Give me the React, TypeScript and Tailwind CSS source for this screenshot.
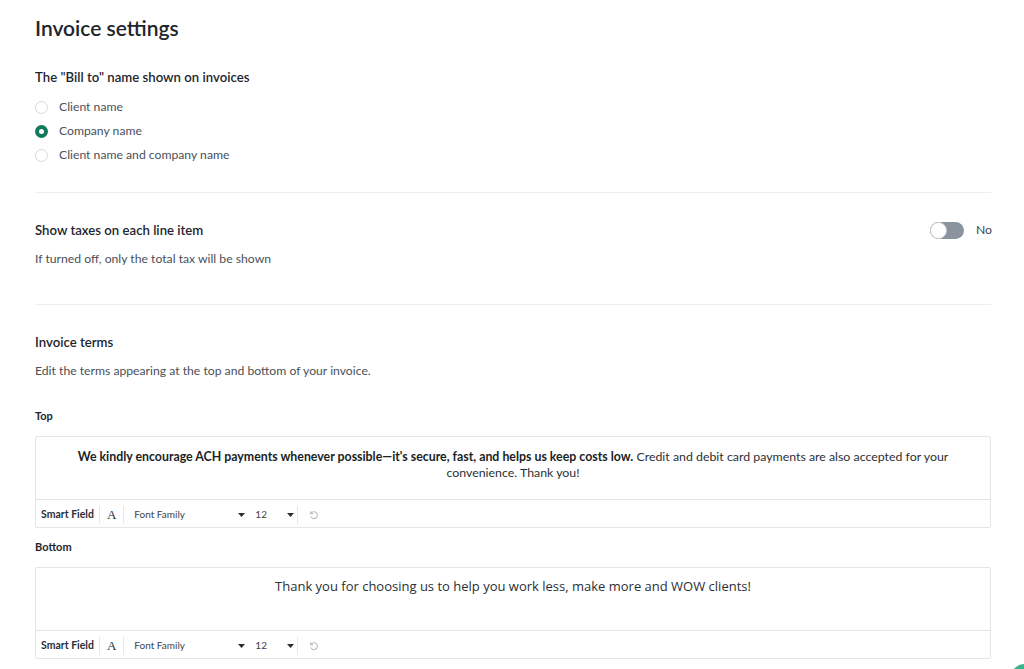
import React from "react";

function Radio({ checked, label }: { checked?: boolean; label: string }) {
  return (
    <div className="flex items-center h-6">
      {checked ? (
        <span className="w-[13px] h-[13px] rounded-full bg-[#127a5b] flex items-center justify-center">
          <span className="w-[5px] h-[5px] rounded-full bg-white" />
        </span>
      ) : (
        <span className="w-[13px] h-[13px] rounded-full border border-[#d6d9dc] bg-white" />
      )}
      <span className="ml-[11px] text-[12.2px] text-[#4a5058]">{label}</span>
    </div>
  );
}

function Caret() {
  return (
    <svg width="7" height="4" viewBox="0 0 7 4" className="fill-[#2a2f35] shrink-0">
      <path d="M0 0h7L3.5 4z" />
    </svg>
  );
}

function Toolbar() {
  return (
    <div className="h-[28px] pt-[2px] border-t border-[#e3e5e8] flex items-center text-[10px] text-[#3c434b]">
      <span className="pl-[5px] pr-[5px] text-[10.5px] font-bold text-[#2a2f35]">Smart Field</span>
      <span className="w-px h-[18px] bg-[#e6e8ea]" />
      <span className="px-[7px] text-[13px] text-[#2a2f35]" style={{ fontFamily: '"Liberation Serif", serif' }}>
        A
      </span>
      <span className="w-px h-[18px] bg-[#e6e8ea]" />
      <span className="pl-[10px] w-[114px]">Font Family</span>
      <Caret />
      <span className="pl-[10px] w-[42px]">12</span>
      <Caret />
      <span className="ml-[3px] w-px h-[18px] bg-[#e6e8ea]" />
      <svg width="10" height="10" viewBox="0 0 10 10" className="ml-[11px]" fill="none" stroke="#b8bdc3" strokeWidth="1.1">
        <path d="M2.2 3.2A3.4 3.4 0 1 1 1.8 6.4" />
        <path d="M1.6 1.2v2.4h2.4" />
      </svg>
    </div>
  );
}

export default function App() {
  return (
    <div
      className="relative w-[1024px] h-[669px] overflow-hidden bg-white text-[#1e252d]"
      style={{ fontFamily: 'Lato, "Open Sans", sans-serif' }}
    >
      <div className="pl-[35px] pr-[33px] pt-[14px]">
        <h1 className="text-[21px] leading-[28px] font-semibold text-[#1e252d]">Invoice settings</h1>

        <div className="mt-[26px]">
          <div className="text-[13.2px] leading-[18px] font-semibold">The "Bill to" name shown on invoices</div>
          <div className="mt-[9px] flex flex-col">
            <Radio label="Client name" />
            <Radio checked label="Company name" />
            <Radio label="Client name and company name" />
          </div>
        </div>

        <div className="mt-[25px] h-px bg-[#eceef0]" />

        <div className="flex justify-between pt-[28px] pb-[37px]">
          <div>
            <div className="text-[13.2px] leading-[18px] font-semibold">Show taxes on each line item</div>
            <div className="mt-[12px] text-[12.2px] leading-[16px] text-[#4a5058]">If turned off, only the total tax will be shown</div>
          </div>
          <div className="flex items-center h-[18px] mr-[-1px]">
            <span className="relative w-[34px] h-[17px] rounded-full bg-[#8a939e]">
              <span className="absolute left-0 top-0 w-[17px] h-[17px] rounded-full bg-white border border-[#c9ced4]" />
            </span>
            <span className="ml-[12px] text-[12.2px] text-[#3c434b]">No</span>
          </div>
        </div>

        <div className="h-px bg-[#eceef0]" />

        <div className="pt-[28px]">
          <div className="text-[13.2px] leading-[18px] font-semibold">Invoice terms</div>
          <div className="mt-[12px] text-[12.2px] leading-[16px] text-[#4a5058]">
            Edit the terms appearing at the top and bottom of your invoice.
          </div>

          <div className="mt-[30px] text-[11px] leading-[14px] font-bold">Top</div>
          <div className="mt-[13px] border border-[#e3e5e8] rounded-[2px]">
            <div className="h-[62px] px-[40px] pt-[12px] text-center text-[12.35px] leading-[16px] text-[#2a2f35]">
              <b className="font-bold text-[#1a1f25]">
                We kindly encourage ACH payments whenever possible—it's secure, fast, and helps us keep costs low.
              </b>{" "}
              Credit and debit card payments are also accepted for your convenience. Thank you!
            </div>
            <Toolbar />
          </div>

          <div className="mt-[12px] text-[11px] leading-[14px] font-bold">Bottom</div>
          <div className="mt-[13px] border border-[#e3e5e8] rounded-[2px]">
            <div
              className="h-[62px] pt-[9px] text-center text-[13px] leading-[18px] text-[#2a2f35]"
              style={{ fontFamily: '"Open Sans", sans-serif' }}
            >
              Thank you for choosing us to help you work less, make more and WOW clients!
            </div>
            <Toolbar />
          </div>
        </div>
      </div>

      <span className="absolute left-[1010px] top-[664px] w-[30px] h-[30px] rounded-full bg-[#36b58a]" />
    </div>
  );
}
